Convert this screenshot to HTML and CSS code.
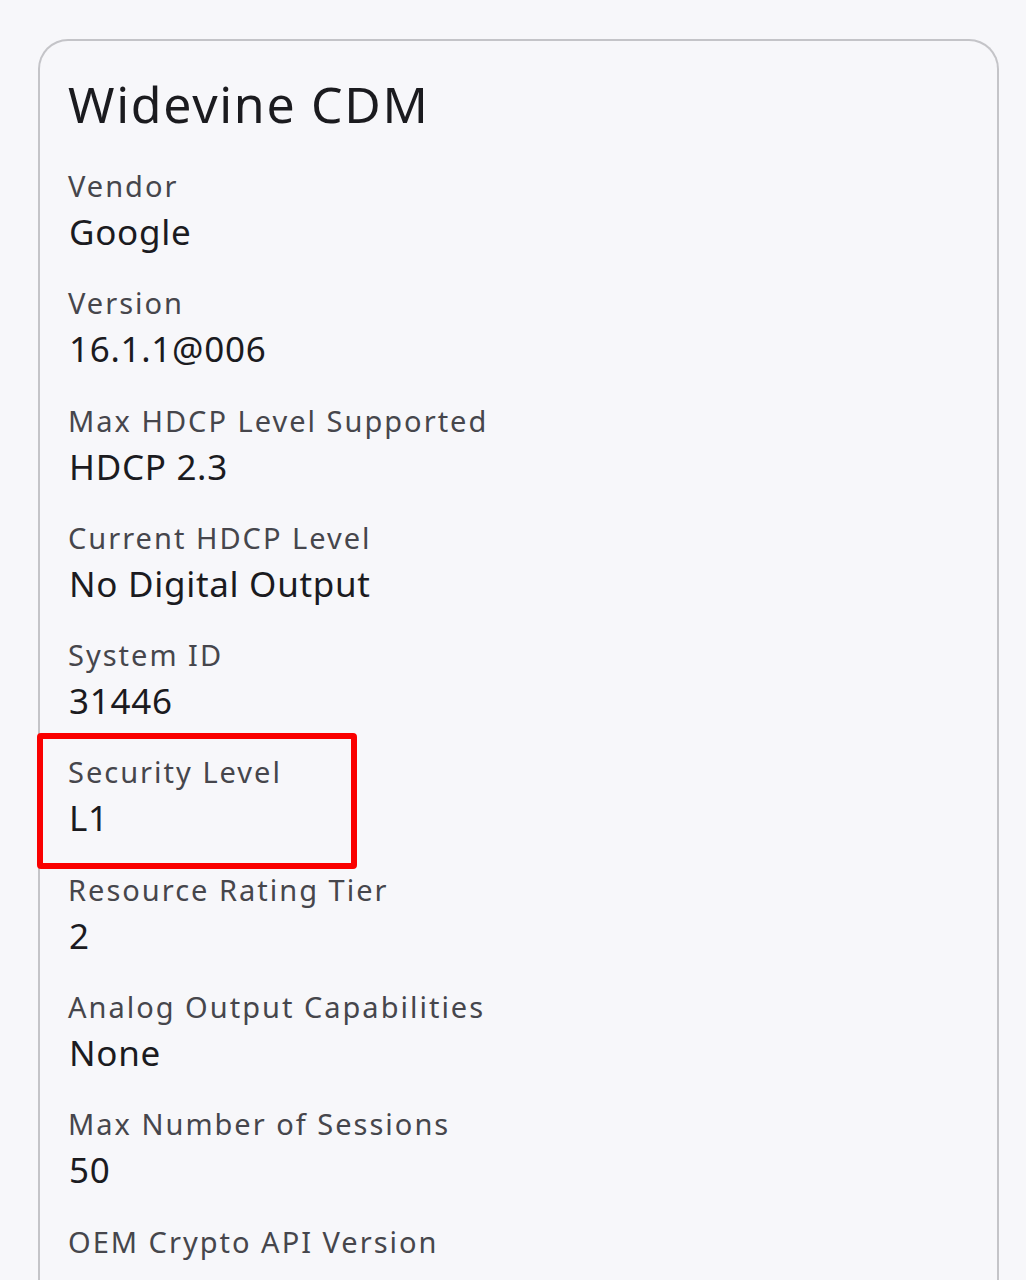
FILE: index.html
```html
<!DOCTYPE html>
<html>
<head>
<meta charset="utf-8">
<link rel="stylesheet" href="styles.css">
</head>
<body>
<div class="card">
  <h1 class="title">Widevine CDM</h1>
  <dl class="props">
    <div class="prop"><dt>Vendor</dt><dd>Google</dd></div>
    <div class="prop"><dt>Version</dt><dd>16.1.1@006</dd></div>
    <div class="prop"><dt>Max HDCP Level Supported</dt><dd>HDCP 2.3</dd></div>
    <div class="prop"><dt>Current HDCP Level</dt><dd>No Digital Output</dd></div>
    <div class="prop"><dt>System ID</dt><dd>31446</dd></div>
    <div class="prop highlight"><dt>Security Level</dt><dd>L1</dd></div>
    <div class="prop"><dt>Resource Rating Tier</dt><dd>2</dd></div>
    <div class="prop"><dt>Analog Output Capabilities</dt><dd>None</dd></div>
    <div class="prop"><dt>Max Number of Sessions</dt><dd>50</dd></div>
    <div class="prop"><dt>OEM Crypto API Version</dt></div>
  </dl>
</div>
</body>
</html>
```
FILE: styles.css
```css
html, body {
  margin: 0;
  padding: 0;
  background: #f7f7fa;
  height: 1280px;
  overflow: hidden;
}
body {
  font-family: "Noto Sans", "Open Sans", sans-serif;
}
.card {
  margin: 39px 0 0 38px;
  width: 961px;
  height: 1400px;
  border: 2px solid #c4c4c8;
  border-bottom: none;
  border-radius: 30px 30px 0 0;
  padding: 33px 0 0 28px;
  box-sizing: border-box;
}
.title {
  margin: 0;
  font-size: 50px;
  line-height: 60px;
  font-weight: 400;
  color: #1b1b1f;
  letter-spacing: 1.7px;
}
.props {
  margin: 30px 0 0 0;
  display: flex;
  flex-direction: column;
  gap: 26.3px;
}
.prop {
  position: relative;
}
.prop dt {
  font-size: 29px;
  line-height: 44px;
  color: #46464c;
  letter-spacing: 2px;
}
.prop dd {
  margin: 0 0 0 1px;
  font-size: 35px;
  line-height: 47px;
  color: #1b1b1f;
  letter-spacing: 0.7px;
}
.highlight::before {
  content: "";
  position: absolute;
  left: -31px;
  top: -17px;
  width: 308px;
  height: 124px;
  border: 6px solid #fa0000;
  border-radius: 4px;
}
```
